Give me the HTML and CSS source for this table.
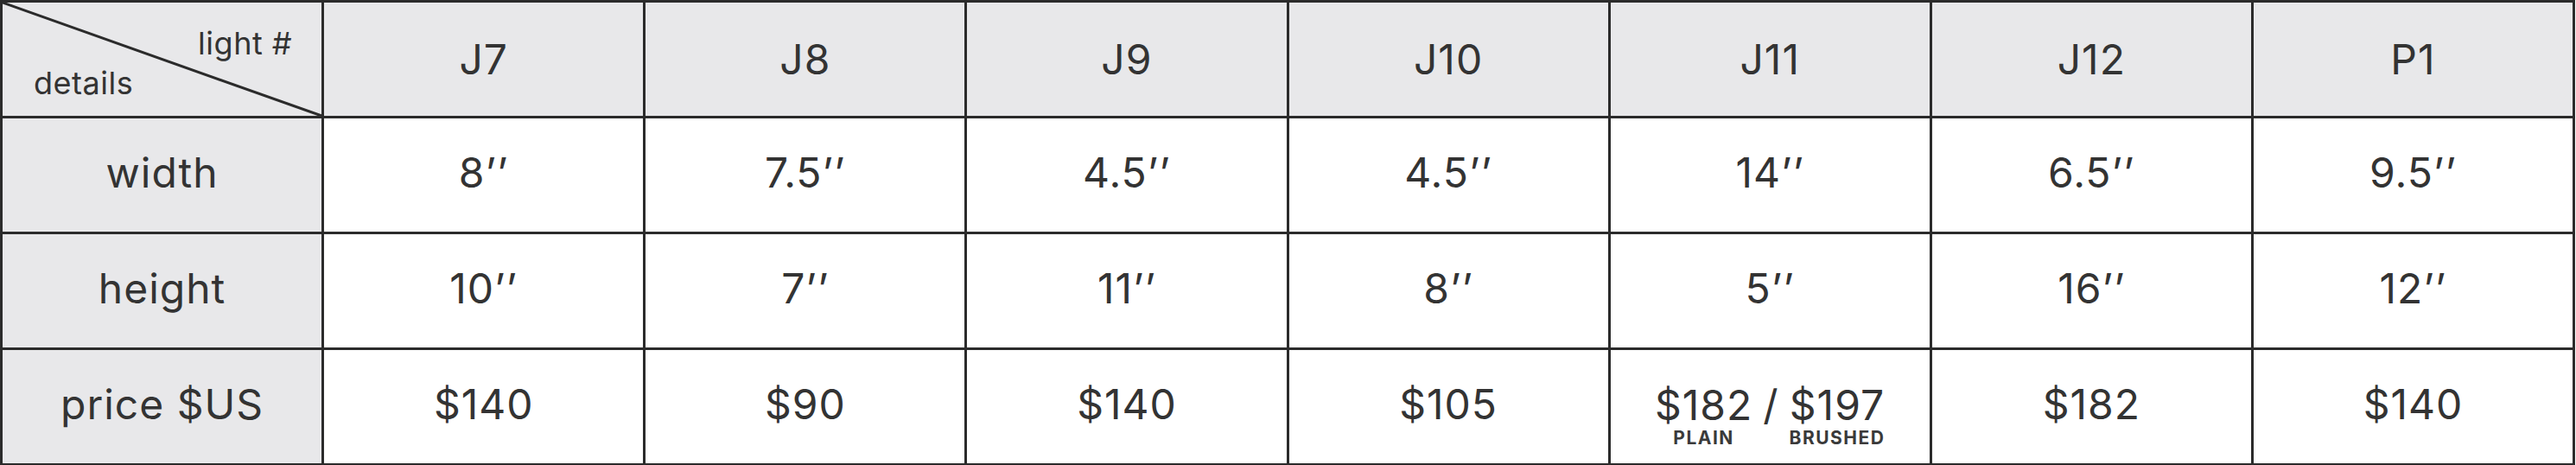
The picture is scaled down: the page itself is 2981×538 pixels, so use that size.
FILE: index.html
```html
<!DOCTYPE html>
<html>
<head>
<meta charset="utf-8">
<link rel="stylesheet" href="styles.css">
</head>
<body>
<table class="spec">
  <colgroup>
    <col><col><col><col><col><col><col><col>
  </colgroup>
  <thead>
    <tr>
      <th class="corner">
        <svg class="diag" viewBox="0 0 100 100" preserveAspectRatio="none"><line x1="0" y1="0" x2="100" y2="100" stroke="#2b2b2b" stroke-width="3" vector-effect="non-scaling-stroke"/></svg>
        <div class="corner-labels">
          <span class="lbl-light">light #</span>
          <span class="lbl-details">details</span>
        </div>
      </th>
      <th>J7</th><th>J8</th><th>J9</th><th>J10</th><th>J11</th><th>J12</th><th>P1</th>
    </tr>
  </thead>
  <tbody>
    <tr>
      <th class="rowhead">width</th>
      <td>8’’</td><td>7.5’’</td><td>4.5’’</td><td>4.5’’</td><td>14’’</td><td>6.5’’</td><td>9.5’’</td>
    </tr>
    <tr>
      <th class="rowhead">height</th>
      <td>10’’</td><td>7’’</td><td>11’’</td><td>8’’</td><td>5’’</td><td>16’’</td><td>12’’</td>
    </tr>
    <tr>
      <th class="rowhead">price $US</th>
      <td>$140</td><td>$90</td><td>$140</td><td>$105</td>
      <td class="split">
        <div class="prices">
          <div class="opt"><span class="amt">$182</span><span class="tag">PLAIN</span></div>
          <span class="slash">/</span>
          <div class="opt"><span class="amt">$197</span><span class="tag">BRUSHED</span></div>
        </div>
      </td>
      <td>$182</td><td>$140</td>
    </tr>
  </tbody>
</table>
</body>
</html>
```
FILE: styles.css
```css
html, body {
  margin: 0;
  padding: 0;
  background: #ffffff;
}
body {
  font-family: Inter, "Noto Sans", "DejaVu Sans", sans-serif;
  color: #333333;
}
.spec {
  width: 2980px;
  border-collapse: collapse;
  table-layout: fixed;
  margin: 0;
}
.spec col {
  width: 12.5%;
}
.spec tr {
  height: 134px;
}
.spec th,
.spec td {
  border: 3px solid #2b2b2b;
  padding: 0;
  text-align: center;
  vertical-align: middle;
  font-size: 48px;
  line-height: 56px;
  font-weight: 400;
  color: #333333;
  letter-spacing: 1px;
}
.spec thead th {
  background: #e8e8ea;
}
.spec .rowhead {
  background: #e8e8ea;
}
.spec tbody td {
  background: #ffffff;
}
.spec tbody td,
.spec tbody th {
  padding-bottom: 6px;
}
.corner {
  position: relative;
}
.diag {
  position: absolute;
  left: 0;
  top: 0;
  width: 100%;
  height: 100%;
}
.corner-labels {
  display: flex;
  flex-direction: column;
  font-size: 36px;
  line-height: 46px;
  letter-spacing: 0.5px;
  padding-top: 8px;
}
.lbl-light {
  align-self: flex-end;
  padding-right: 34px;
}
.lbl-details {
  align-self: flex-start;
  padding-left: 36px;
}
.spec td.split {
  padding-bottom: 0;
}
.prices {
  display: flex;
  justify-content: center;
  align-items: flex-start;
  gap: 12px;
  padding-top: 18px;
}
.opt {
  display: flex;
  flex-direction: column;
  align-items: center;
}
.amt,
.slash {
  line-height: 54px;
}
.tag {
  font-size: 21px;
  font-weight: 700;
  letter-spacing: 1.5px;
  line-height: 22px;
  color: #3a3a3a;
}
```
